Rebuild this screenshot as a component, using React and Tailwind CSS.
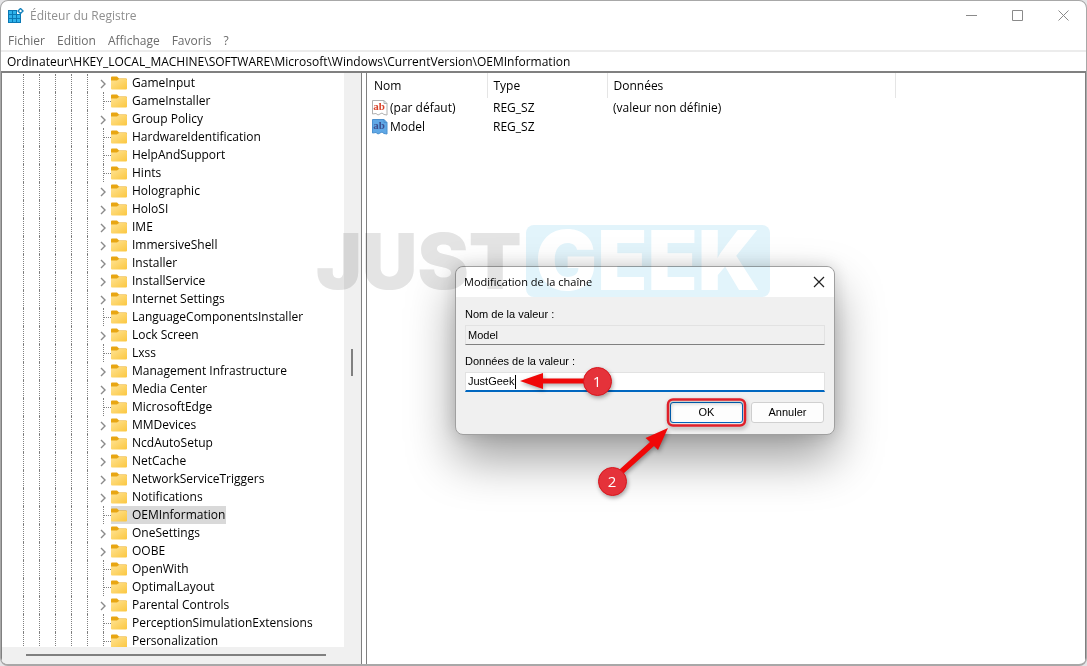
import React, { useState } from "react";

const keys = [
  { name: "GameInput", open: true },
  { name: "GameInstaller" },
  { name: "Group Policy", open: true },
  { name: "HardwareIdentification" },
  { name: "HelpAndSupport" },
  { name: "Hints" },
  { name: "Holographic", open: true },
  { name: "HoloSI", open: true },
  { name: "IME", open: true },
  { name: "ImmersiveShell", open: true },
  { name: "Installer", open: true },
  { name: "InstallService", open: true },
  { name: "Internet Settings", open: true },
  { name: "LanguageComponentsInstaller" },
  { name: "Lock Screen", open: true },
  { name: "Lxss" },
  { name: "Management Infrastructure", open: true },
  { name: "Media Center", open: true },
  { name: "MicrosoftEdge" },
  { name: "MMDevices", open: true },
  { name: "NcdAutoSetup", open: true },
  { name: "NetCache", open: true },
  { name: "NetworkServiceTriggers", open: true },
  { name: "Notifications", open: true },
  { name: "OEMInformation" },
  { name: "OneSettings", open: true },
  { name: "OOBE", open: true },
  { name: "OpenWith" },
  { name: "OptimalLayout" },
  { name: "Parental Controls", open: true },
  { name: "PerceptionSimulationExtensions" },
  { name: "Personalization" },
];

const values = [
  { name: "(par défaut)", type: "REG_SZ", data: "(valeur non définie)" },
  { name: "Model", type: "REG_SZ", data: "", selected: true },
];

const menus = ["Fichier", "Edition", "Affichage", "Favoris", "?"];

function RegistryIcon() {
  return (
    <svg width="16" height="16" viewBox="0 0 16 16">
      <path d="M0 2h9v4h4v9H0z" fill="#0a78b4" />
      <path d="M1 3h3v3H1zM5 3h3v3H5zM1 7h3v3H1zM5 7h3v3H5zM9 7h3v3H9zM1 11h3v3H1zM5 11h3v3H5zM9 11h3v3H9z" fill="#2fb2ea" />
      <path d="M12.5 0.5l2.500 2.500-2.500 2.500L10 3z" fill="#fff" stroke="#1583bd" strokeWidth="1.4" />
    </svg>
  );
}

function FolderIcon() {
  return (
    <svg width="16" height="14" viewBox="0 0 16 14" className="shrink-0">
      <defs>
        <linearGradient id="folder" x1="0" y1="0" x2="1" y2="1">
          <stop offset="0" stopColor="#ffe394" />
          <stop offset="1" stopColor="#fbc740" />
        </linearGradient>
      </defs>
      <path d="M0 1.500a1 1 0 0 1 1-1h5l2 2h7a1 1 0 0 1 1 1v4H0z" fill="#e8a613" />
      <path d="M0 4.500h6l2-1.500h7a1 1 0 0 1 1 1v8.500a1 1 0 0 1-1 1H1a1 1 0 0 1-1-1z" fill="url(#folder)" />
    </svg>
  );
}

function StringIcon({ selected }) {
  return (
    <svg width="16" height="16" viewBox="0 0 16 16" className="shrink-0">
      <path
        d="M.5.5h11.500l3 3v11.500l-3-.5-2-1.500-2 1-2 1-2-1.500-3.500.5z"
        fill={selected ? "#5fa8e6" : "#fff"}
        stroke={selected ? "#4a90cf" : "#b0b0b0"}
      />
      <path d="M12 .5v3h3" fill="none" stroke={selected ? "#4a90cf" : "#b0b0b0"} />
      <text x="7" y="10" textAnchor="middle" fontSize="11" fontWeight="700" fontFamily="Liberation Serif, serif" fill={selected ? "#3c4f8f" : "#d9432a"}>
        ab
      </text>
    </svg>
  );
}

function TreeRow({ item, selected, onSelect }) {
  return (
    <li className="flex h-[18px] shrink-0">
      {[0, 1, 2, 3, 4].map((i) => (
        <span key={i} className="w-4 shrink-0 border-l border-dotted border-[#808080]" />
      ))}
      {item.open ? (
        <span className="flex w-2 shrink-0 items-center">
          <svg width="6" height="10" viewBox="0 0 6 10" className="-ml-[3px] mt-[2px] shrink-0" fill="none" stroke="#8a8a8a" strokeWidth="1.4">
            <path d="M1 1l4 4-4 4" />
          </svg>
        </span>
      ) : (
        <span className="flex w-2 shrink-0 items-center border-l border-dotted border-[#808080]">
          <span className="w-full border-t border-dotted border-[#808080]" />
        </span>
      )}
      <button
        onClick={onSelect}
        className={`flex items-center gap-[5px] pr-px whitespace-nowrap ${selected ? "bg-[#d9d9d9]" : ""}`}
      >
        <FolderIcon />
        {item.name}
      </button>
    </li>
  );
}

function Dialog({ value, onChange }) {
  return (
    <div
      role="dialog"
      aria-label="Modification de la chaîne"
      className="absolute top-[266px] left-[455px] w-[380px] rounded-lg border border-[#a0a0a0] bg-[#f0f0f0] font-['Liberation_Sans',sans-serif] text-[11px] shadow-[0_24px_48px_rgba(0,0,0,0.38),0_0_16px_rgba(0,0,0,0.14)]"
    >
      <div className="flex h-[30px] items-center justify-between rounded-t-lg bg-white pr-[5px] pl-2 font-['Open_Sans',sans-serif]">
        <h2>Modification de la chaîne</h2>
        <button aria-label="Fermer" className="p-1">
          <svg width="12" height="12" viewBox="0 0 12 12" stroke="#222" strokeWidth="1.2">
            <path d="M1 1l10 10M11 1L1 11" />
          </svg>
        </button>
      </div>
      <div className="px-[9px] pt-2 pb-[11px]">
        <label htmlFor="value-name" className="block h-5 leading-[18px]">Nom de la valeur :</label>
        <input
          id="value-name"
          readOnly
          value="Model"
          className="block h-5 w-full border border-[#e2e2e2] border-b-[#808080] px-[2px] outline-none"
        />
        <label htmlFor="value-data" className="mt-[7px] block h-5 leading-[18px]">Données de la valeur :</label>
        <div className="flex h-5 items-center border border-b-2 border-[#e2e2e2] border-b-[#0067c0] bg-white pl-[2px]">
          <input
            id="value-data"
            value={value}
            onChange={onChange}
            className="h-[14px] w-[48px] border-r border-black outline-none"
          />
        </div>
        <div className="mt-[10px] mr-px flex justify-end gap-2">
          <button className="h-[21px] w-[73px] rounded-[3px] border border-[#0067c0] bg-[#fdfdfd]">OK</button>
          <button className="h-[21px] w-[73px] rounded-[3px] border border-[#d0d0d0] bg-[#fdfdfd]">Annuler</button>
        </div>
      </div>
    </div>
  );
}

function Watermark() {
  return (
    <div className="pointer-events-none absolute top-[225px] left-[316px] flex h-[72px] items-center font-['Inter',sans-serif] text-[77px] leading-[72px] font-black mix-blend-multiply">
      <span className="text-[#e4e4e4]">JUST</span>
      <span className="ml-1 w-[244px] rounded-lg bg-[#e2f4fb] text-center text-[82px] text-white">GEEK</span>
    </div>
  );
}

// numbered steps drawn over the dialog
function Steps() {
  return (
    <svg
      width="240"
      height="150"
      viewBox="510 360 240 150"
      className="pointer-events-none absolute top-[360px] left-[510px] drop-shadow-[1px_2px_2px_rgba(0,0,0,0.35)]"
    >
      <rect x="668" y="399.500" width="77" height="26" rx="5" fill="none" stroke="#e0202a" strokeWidth="2.500" />
      <path d="M520 381l23-8v5.500h42v5h-42v5.500z" fill="#f00808" />
      <path d="M668 428l-10 22-4-4-31 28-4-4 31-28-4.500-4z" fill="#f00808" />
      <circle cx="597.500" cy="381.500" r="14" fill="#e5323a" stroke="#d8151c" />
      <circle cx="612.500" cy="481.500" r="14" fill="#e5323a" stroke="#d8151c" />
      <g fill="#fff" fontFamily="Open Sans, sans-serif" fontSize="15" textAnchor="middle">
        <text x="597" y="387">1</text>
        <text x="612" y="487">2</text>
      </g>
    </svg>
  );
}

export default function App() {
  const [selected, setSelected] = useState("OEMInformation");
  const [data, setData] = useState("JustGeek");

  return (
    <div className="relative h-screen overflow-hidden bg-[#e4e4e6] font-['Open_Sans',sans-serif] text-[12px] text-black">
      <div className="flex h-full flex-col overflow-hidden rounded-lg border border-b-2 border-[#a8a8a8] bg-white">
        <header className="flex h-[29px] shrink-0 items-center justify-between pl-[7px]">
          <div className="flex items-center gap-[6px] text-[#8f8f8f]">
            <RegistryIcon />
            <h1>Éditeur du Registre</h1>
          </div>
          <div className="flex h-full text-[#8a8a8a]">
            <button aria-label="Réduire" className="flex w-[46px] items-center justify-center">
              <svg width="11" height="11" viewBox="0 0 11 11" stroke="currentColor"><path d="M0 5.500h11" /></svg>
            </button>
            <button aria-label="Agrandir" className="flex w-[46px] items-center justify-center">
              <svg width="11" height="11" viewBox="0 0 11 11" fill="none" stroke="currentColor"><path d="M.5.500h10v10H.5z" /></svg>
            </button>
            <button aria-label="Fermer" className="flex w-[46px] items-center justify-center">
              <svg width="11" height="11" viewBox="0 0 11 11" stroke="currentColor"><path d="M.5.500l10 10M10.500.5l-10 10" /></svg>
            </button>
          </div>
        </header>

        <nav className="flex h-5 shrink-0 items-center gap-3 pt-[2px] pl-[7px] text-[#6b6b6b]">
          {menus.map((m) => (
            <button key={m}>{m}</button>
          ))}
        </nav>

        <input
          aria-label="Adresse"
          readOnly
          value="Ordinateur\HKEY_LOCAL_MACHINE\SOFTWARE\Microsoft\Windows\CurrentVersion\OEMInformation"
          className="h-[21px] shrink-0 border-t-2 border-[#ececec] px-[6px] outline-none"
        />

        <main className="flex min-h-0 flex-1 border-t-2 border-[#808080]">
          <section className="flex w-[361px] shrink-0 flex-col border-x border-[#808080] bg-[#f0f0f0]">
            <div className="flex min-h-0 flex-1">
              <ul className="flex min-w-0 flex-1 flex-col overflow-hidden bg-white pt-px pl-[21px]">
                {keys.map((k) => (
                  <TreeRow key={k.name} item={k} selected={k.name === selected} onSelect={() => setSelected(k.name)} />
                ))}
              </ul>
              <div className="flex w-[17px] justify-center pt-[276px] pr-[2px]">
                <div className="h-[27px] w-[2px] bg-[#808080]" />
              </div>
            </div>
            <div className="flex h-[17px] shrink-0 items-center pb-[2px] pl-6">
              <div className="h-[2px] w-[300px] bg-[#808080]" />
            </div>
          </section>

          <section className="ml-1 min-w-0 flex-1 border-x border-[#808080]">
            <table className="table-fixed border-collapse text-left">
              <thead>
                <tr className="h-[25px]">
                  <th className="w-[120px] border-r border-[#e5e5e5] pl-[7px] font-normal">Nom</th>
                  <th className="w-[120px] border-r border-[#e5e5e5] pl-[6px] font-normal">Type</th>
                  <th className="w-[288px] border-r border-[#e5e5e5] pl-[6px] font-normal">Données</th>
                </tr>
              </thead>
              <tbody>
                {values.map((v) => (
                  <tr key={v.name} className="h-[19px] leading-[18px]">
                    <td className="pl-[5px]">
                      <span className="flex items-center gap-[2px]">
                        <StringIcon selected={v.selected} />
                        {v.name}
                      </span>
                    </td>
                    <td className="pl-[6px]">{v.type}</td>
                    <td className="pl-[6px]">{v.data}</td>
                  </tr>
                ))}
              </tbody>
            </table>
          </section>
        </main>
      </div>

      <Dialog value={data} onChange={(e) => setData(e.target.value)} />
      <Watermark />
      <Steps />
    </div>
  );
}
